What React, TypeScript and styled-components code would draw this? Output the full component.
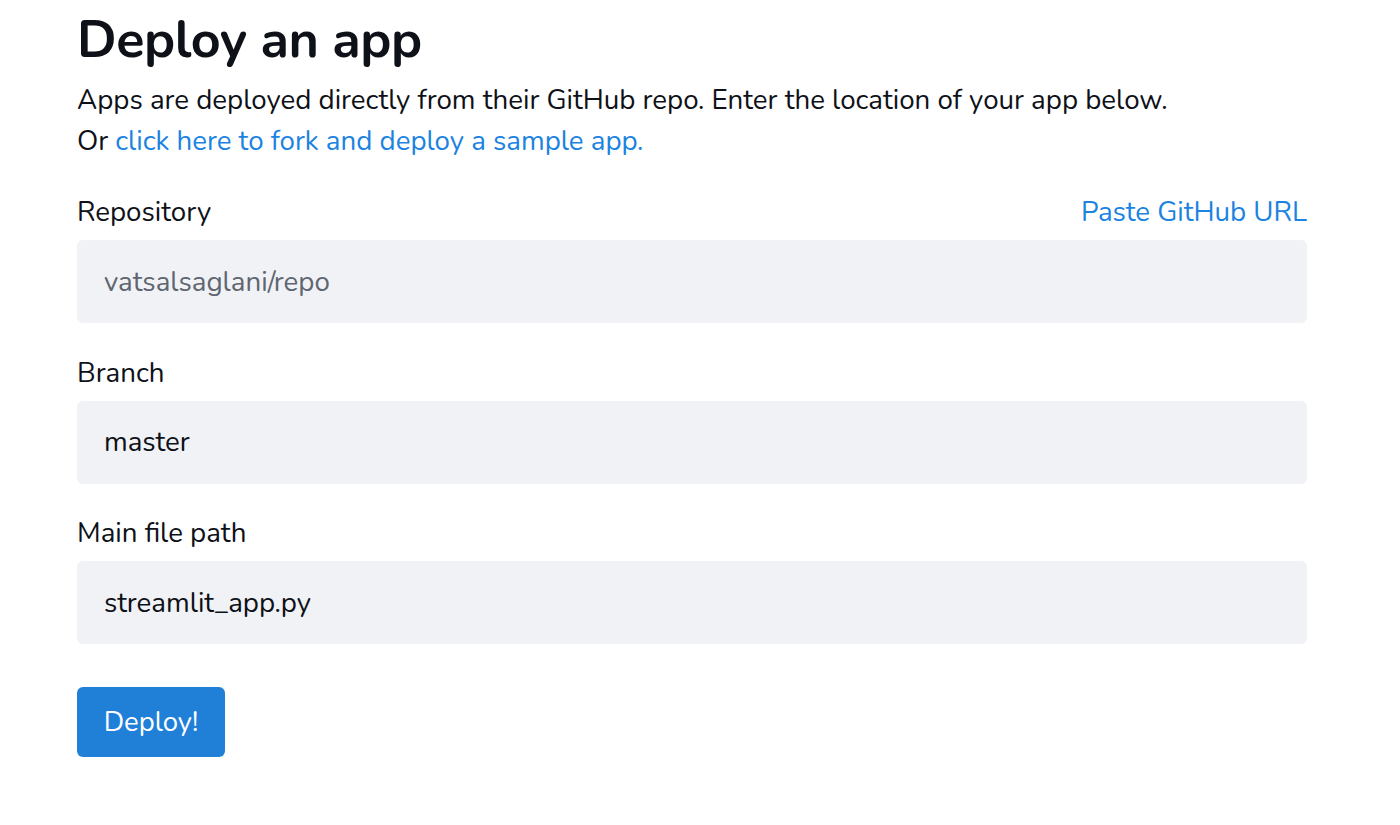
import styled, { createGlobalStyle } from 'styled-components';

const GlobalStyle = createGlobalStyle`
  html, body {
    margin: 0;
    padding: 0;
    background: #ffffff;
  }
  body {
    font-family: 'Nunito', 'Lato', 'Open Sans', sans-serif;
    color: #0e1117;
  }
`;

const Page = styled.main`
  width: 1230px;
  padding: 8px 0 40px 77px;
`;

const Title = styled.h1`
  margin: 0;
  font-size: 52px;
  font-weight: 700;
  line-height: 64px;
  letter-spacing: -0.4px;
`;

const Lead = styled.p`
  margin: 8px 0 0;
  font-size: 27.7px;
  line-height: 41px;
`;

const TextLink = styled.a`
  color: #1c83e1;
  text-decoration: none;
`;

const Field = styled.div<{ $first?: boolean }>`
  margin-top: ${({ $first }) => ($first ? '30px' : '29.5px')};
`;

const LabelRow = styled.div`
  display: flex;
  justify-content: space-between;
  align-items: center;
  height: 40px;
  font-size: 27.7px;
  margin-bottom: 8px;
`;

const Input = styled.div<{ $muted?: boolean }>`
  height: 83px;
  box-sizing: border-box;
  display: flex;
  align-items: center;
  padding: 0 27px;
  background: #f0f2f6;
  border-radius: 6px;
  font-size: 27.7px;
  color: ${({ $muted }) => ($muted ? '#5f6670' : '#0e1117')};
`;

const Button = styled.button`
  margin-top: 43px;
  width: 148px;
  height: 70px;
  border: none;
  border-radius: 6px;
  background: #2080d8;
  color: #ffffff;
  font-family: inherit;
  font-size: 27.5px;
`;

export default function App() {
  return (
    <>
      <GlobalStyle />
      <Page>
        <Title>Deploy an app</Title>
        <Lead>
          Apps are deployed directly from their GitHub repo. Enter the location of your app below.
          <br />
          Or <TextLink href="#">click here to fork and deploy a sample app.</TextLink>
        </Lead>
        <Field $first>
          <LabelRow>
            <span>Repository</span>
            <TextLink href="#">Paste GitHub URL</TextLink>
          </LabelRow>
          <Input $muted>vatsalsaglani/repo</Input>
        </Field>
        <Field>
          <LabelRow>
            <span>Branch</span>
          </LabelRow>
          <Input>master</Input>
        </Field>
        <Field>
          <LabelRow>
            <span>Main file path</span>
          </LabelRow>
          <Input>streamlit_app.py</Input>
        </Field>
        <Button>Deploy!</Button>
      </Page>
    </>
  );
}
